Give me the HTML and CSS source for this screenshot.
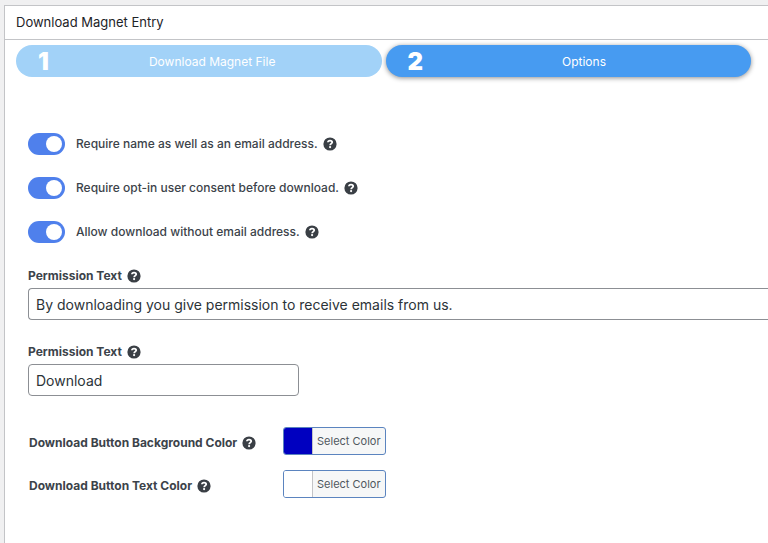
FILE: index.html
```html
<!DOCTYPE html>
<html lang="en">
<head>
    <meta charset="UTF-8">
    <meta name="viewport" content="width=device-width, initial-scale=1.0">
    <title>Download Magnet Entry</title>
    <link rel="stylesheet" href="styles.css">
</head>

<body>
    <!-- Help icon, reused next to every label -->
    <svg class="sprite" aria-hidden="true">
        <symbol id="help" viewBox="0 0 14 14">
            <circle cx="7" cy="7" r="6.6" fill="#3a3f45"/>
            <path d="M4.9 5.3C5 4.1 5.9 3.6 7 3.6s2.2.6 2.2 1.7c0 1.3-2 1.4-2 2.9" fill="none" stroke="#fff" stroke-width="1.8"/>
            <circle cx="7.1" cy="10.1" r="1.1" fill="#fff"/>
        </symbol>
    </svg>

    <main class="panel">
        <h1 class="panel-title">Download Magnet Entry</h1>

        <nav class="steps">
            <button type="button" class="step"><span class="step-number">1</span><span class="step-name">Download Magnet File</span></button>
            <button type="button" class="step active" aria-current="step"><span class="step-number">2</span><span class="step-name">Options</span></button>
        </nav>

        <form class="options">
            <div class="toggles">
                <div class="toggle-row">
                    <input type="checkbox" class="toggle" id="require-name" checked>
                    <label class="toggle-label" for="require-name">Require name as well as an email address.</label>
                    <button type="button" class="help" aria-label="Help"><svg><use href="#help"/></svg></button>
                </div>
                <div class="toggle-row">
                    <input type="checkbox" class="toggle" id="require-consent" checked>
                    <label class="toggle-label" for="require-consent">Require opt-in user consent before download.</label>
                    <button type="button" class="help" aria-label="Help"><svg><use href="#help"/></svg></button>
                </div>
                <div class="toggle-row">
                    <input type="checkbox" class="toggle" id="allow-no-email" checked>
                    <label class="toggle-label" for="allow-no-email">Allow download without email address.</label>
                    <button type="button" class="help" aria-label="Help"><svg><use href="#help"/></svg></button>
                </div>
            </div>

            <div class="field">
                <div class="field-head">
                    <label for="permission-text">Permission Text</label>
                    <button type="button" class="help" aria-label="Help"><svg><use href="#help"/></svg></button>
                </div>
                <input type="text" class="text-input wide" id="permission-text" value="By downloading you give permission to receive emails from us.">
            </div>

            <div class="field">
                <div class="field-head">
                    <label for="button-text">Permission Text</label>
                    <button type="button" class="help" aria-label="Help"><svg><use href="#help"/></svg></button>
                </div>
                <input type="text" class="text-input" id="button-text" value="Download">
            </div>

            <div class="colors">
                <div class="field-head">
                    <label for="background-color">Download Button Background Color</label>
                    <button type="button" class="help" aria-label="Help"><svg><use href="#help"/></svg></button>
                </div>
                <button type="button" class="color-button" id="background-color"><span class="swatch blue"></span><span class="color-text">Select Color</span></button>

                <div class="field-head">
                    <label for="text-color">Download Button Text Color</label>
                    <button type="button" class="help" aria-label="Help"><svg><use href="#help"/></svg></button>
                </div>
                <button type="button" class="color-button" id="text-color"><span class="swatch white"></span><span class="color-text">Select Color</span></button>
            </div>
        </form>
    </main>
</body>
</html>
```
FILE: styles.css
```css
* {
    box-sizing: border-box;
}

body {
    display: flex;
    min-height: 100vh;
    margin: 0;
    padding: 5px 0 0 4px;
    background-color: #f0f0f1;
    color: #3c434a;
    font-family: Inter, "Liberation Sans", sans-serif;
    font-size: 12px;
    line-height: 16px;
}

button,
input {
    font-family: inherit;
}

.sprite {
    position: absolute;
    width: 0;
    height: 0;
}

.panel {
    flex: 1;
    min-width: 0;
    background-color: white;
    border: 1px solid #c3c4c7;
    border-width: 1px 0 0 1px;
}

.panel-title {
    margin: 0;
    padding: 8px 11px 9px;
    border-bottom: 1px solid #c3c4c7;
    color: #1d2327;
    font-size: 13px;
    font-weight: 400;
    line-height: 16px;
}

/* Step tabs */
.steps {
    display: grid;
    grid-template-columns: 1fr 1fr;
    gap: 4px;
    padding: 5px 17px 0 11px;
}

.step {
    display: flex;
    align-items: center;
    height: 32px;
    padding: 0 6px 0 22px;
    border: none;
    border-radius: 16px;
    background-color: #a2d2f8;
    color: white;
    font-size: 12px;
    cursor: pointer;
}

.step.active {
    background-color: #479bf1;
    box-shadow: 0 1px 5px rgba(0, 0, 0, 0.45);
}

.step-number {
    font-size: 24px;
    font-weight: 900;
}

.step-name {
    flex: 1;
}

.options {
    padding: 56px 0 0 23px;
}

/* Toggle switches */
.toggles {
    display: grid;
    gap: 22px;
    margin-bottom: 25px;
}

.toggle-row {
    display: flex;
    align-items: center;
}

.toggle {
    display: flex;
    align-items: center;
    justify-content: flex-end;
    appearance: none;
    width: 37px;
    height: 22px;
    margin: 0 11px 0 0;
    padding: 0 3px;
    border-radius: 11px;
    background-color: #4f80ec;
    cursor: pointer;
}

.toggle::before {
    content: "";
    width: 16px;
    height: 16px;
    border-radius: 50%;
    background-color: white;
}

.toggle:not(:checked) {
    justify-content: flex-start;
    background-color: #c3c4c7;
}

.toggle-label {
    font-weight: 500;
}

.help {
    display: flex;
    margin-left: 5px;
    padding: 0;
    border: none;
    background: none;
    cursor: pointer;
}

.help svg {
    width: 14px;
    height: 14px;
}

/* Text fields */
.field {
    margin-bottom: 24px;
}

.field-head {
    display: flex;
    align-items: center;
    font-weight: 700;
}

.text-input {
    display: block;
    width: 271px;
    height: 32px;
    margin-top: 4px;
    padding: 0 7px;
    border: 1px solid #8c8f94;
    border-radius: 4px;
    background-color: white;
    color: #2c3338;
    font-size: 14px;
}

.text-input.wide {
    width: 100%;
    border-right: none;
    border-radius: 4px 0 0 4px;
}

/* Color pickers */
.colors {
    display: grid;
    grid-template-columns: 255px max-content;
    row-gap: 15px;
    align-items: center;
    padding-top: 7px;
}

.colors .field-head {
    padding: 4px 0 0 1px;
}

.color-button {
    display: flex;
    height: 28px;
    padding: 0;
    overflow: hidden;
    border: 1px solid #5b84bf;
    border-radius: 3px;
    background-color: #f6f7f7;
    color: #50575e;
    font-size: 11px;
    cursor: pointer;
}

.swatch {
    width: 28px;
    height: 26px;
}

.swatch.blue {
    background-color: #0000c0;
}

.swatch.white {
    background-color: white;
}

.color-text {
    padding: 0 4px;
    border-left: 1px solid #c3c4c7;
    line-height: 26px;
}
```
